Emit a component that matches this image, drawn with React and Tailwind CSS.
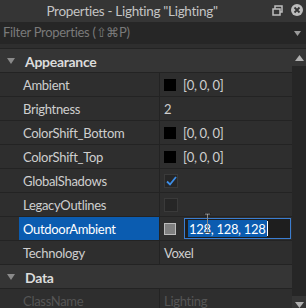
import React from 'react';

const font = { fontFamily: 'Lato, "Noto Sans", sans-serif' };

const Swatch = ({ color = 'bg-black' }) => (
  <span className={`inline-block w-[12px] h-[12px] ${color} mr-[7px]`} />
);

const rows = [
  { name: 'Ambient', value: '[0, 0, 0]', swatch: true },
  { name: 'Brightness', value: '2' },
  { name: 'ColorShift_Bottom', value: '[0, 0, 0]', swatch: true },
  { name: 'ColorShift_Top', value: '[0, 0, 0]', swatch: true },
  { name: 'GlobalShadows', check: true },
  { name: 'LegacyOutlines', check: false },
];

const Row = ({ children, name, selected, dim }) => (
  <div className="flex h-[24px] border-b border-[#232323]">
    <div className="w-[19px] shrink-0" />
    <div
      className={`w-[141px] shrink-0 flex items-center pl-[4px] pt-[2px] border-r border-[#232323] ${
        selected ? 'bg-[#0b5cb0] text-white' : dim ? 'text-[#555]' : 'text-[#cfcfcf]'
      }`}
    >
      {name}
    </div>
    <div className={`flex-1 flex items-center pl-[4px] ${dim ? 'text-[#555]' : 'text-[#cfcfcf]'}`}>
      {children}
    </div>
  </div>
);

const Header = ({ title }) => (
  <div className="flex items-center h-[24px] bg-[#353535] border-b border-[#232323]">
    <svg width="8" height="6" viewBox="0 0 8 6" className="ml-[7px] mr-[10px]">
      <path d="M0 0H8L4 6Z" fill="#8a8a8a" />
    </svg>
    <span className="font-bold text-[14px] text-[#dcdcdc] pt-[1px]">{title}</span>
  </div>
);

export default function App() {
  return (
    <div
      className="w-[306px] h-[308px] bg-[#2e2e2e] text-[13px] tracking-[-0.3px] overflow-hidden relative"
      style={font}
    >
      {/* title bar */}
      <div className="h-[22px] bg-[#353535] flex items-center relative">
        <div className="flex-1 text-center text-[#c4c4c4] text-[13.5px] tracking-[-0.3px] pr-[42px]">
          Properties - Lighting "Lighting"
        </div>
        <div className="absolute right-[3px] top-[4px] flex items-center gap-[8px]">
          <svg width="11" height="11" viewBox="0 0 11 11">
            <rect x="3" y="1" width="7" height="6" fill="none" stroke="#bdbdbd" strokeWidth="1.5" />
            <rect x="1" y="4" width="7" height="6" fill="#353535" stroke="#bdbdbd" strokeWidth="1.5" />
          </svg>
          <svg width="12" height="12" viewBox="0 0 12 12">
            <circle cx="6" cy="6" r="6" fill="#bdbdbd" />
            <path d="M3.5 3.5L8.5 8.5M8.5 3.5L3.5 8.5" stroke="#353535" strokeWidth="1.8" />
          </svg>
        </div>
      </div>

      {/* filter */}
      <div className="h-[22px] bg-[#262626] flex items-center pl-[3px] pr-[5px]">
        <span className="flex-1 text-[#7a7a7a]">Filter Properties (⇧⌘P)</span>
        <svg width="7" height="5" viewBox="0 0 7 5">
          <path d="M0 0H7L3.5 5Z" fill="#9a9a9a" />
        </svg>
      </div>

      <div className="h-[5px] border-b border-[#232323]" />

      <div className="flex">
        <div className="w-[292px] shrink-0">
          <Header title="Appearance" />
          {rows.map((r) => (
            <Row key={r.name} name={r.name}>
              {r.swatch && <Swatch />}
              {r.value && <span className="pt-[2px]">{r.value}</span>}
              {r.check !== undefined && (
                <span className="w-[14px] h-[14px] bg-[#262626] border border-[#3a3a3a] flex items-center justify-center">
                  {r.check && (
                    <svg width="11" height="10" viewBox="0 0 11 10">
                      <path d="M1 5.5L4 8.5L10 1" fill="none" stroke="#3d8ee8" strokeWidth="1.8" />
                    </svg>
                  )}
                </span>
              )}
            </Row>
          ))}
          <Row name="OutdoorAmbient" selected>
            <span className="w-[12px] h-[12px] bg-[#7f7f7f] border border-[#bbb] mr-[8px] shrink-0" />
            <div className="w-[107px] h-[21px] bg-[#1e1e1e] border border-[#3b7dd0] flex items-center pl-[3px]">
              <span className="bg-[#0b5cb0] text-white leading-[16px] px-[1px] pt-[1px]">128, 128, 128</span>
              <span className="w-px h-[15px] bg-white" />
            </div>
          </Row>
          <Row name="Technology"><span className="pt-[2px]">Voxel</span></Row>
          <Header title="Data" />
          <Row name="ClassName" dim><span className="pt-[2px]">Lighting</span></Row>
        </div>
        {/* scrollbar */}
        <div className="w-[14px] bg-[#262626] flex flex-col justify-between">
          <div className="h-[17px] bg-[#353535] flex items-center justify-center">
            <svg width="9" height="6" viewBox="0 0 9 6"><path d="M0 6H9L4.5 0Z" fill="#b0b0b0" /></svg>
          </div>
          <div className="h-[17px] bg-[#353535] flex items-center justify-center">
            <svg width="9" height="6" viewBox="0 0 9 6"><path d="M0 0H9L4.5 6Z" fill="#b0b0b0" /></svg>
          </div>
        </div>
      </div>

      {/* I-beam cursor over the text box */}
      <svg width="7" height="20" viewBox="0 0 7 20" className="absolute left-[204px] top-[213px]">
        <path d="M0.5 0.5H6.5M3.5 0.5V19.5M0.5 19.5H6.5" stroke="#111" strokeWidth="1" fill="none" />
        <path d="M1 1H6M3.5 1V19M1 19H6" stroke="#ddd" strokeWidth="0.6" fill="none" />
      </svg>
    </div>
  );
}
